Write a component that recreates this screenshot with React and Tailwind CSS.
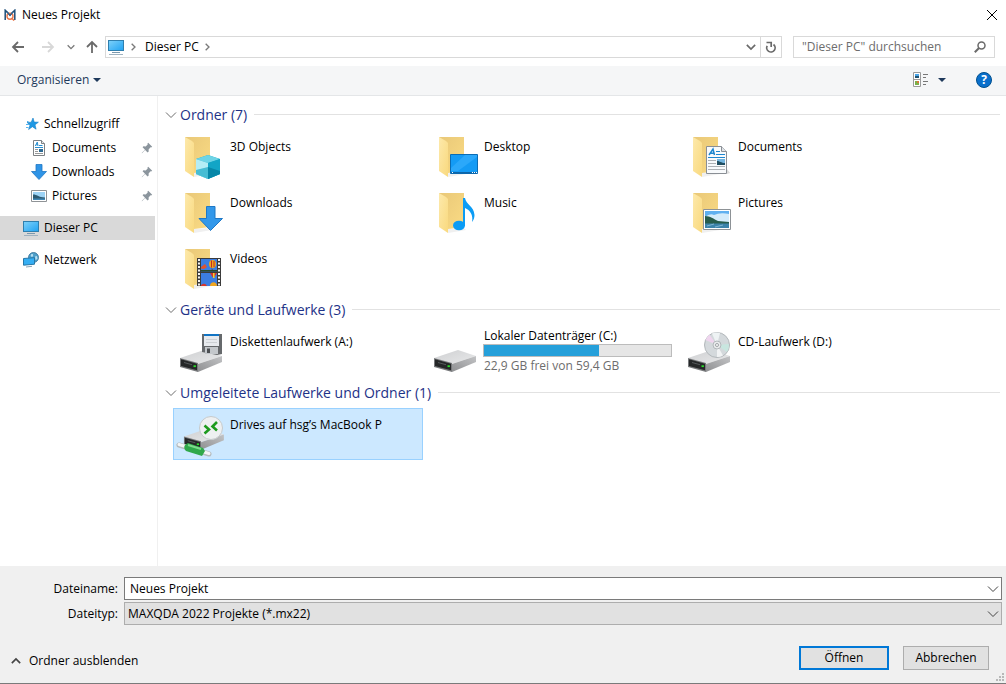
import { useState } from 'react';

const sections = [
  {
    title: 'Ordner (7)',
    items: [
      { name: '3D Objects', icon: 'objects' },
      { name: 'Desktop', icon: 'desktop' },
      { name: 'Documents', icon: 'documents' },
      { name: 'Downloads', icon: 'downloads' },
      { name: 'Music', icon: 'music' },
      { name: 'Pictures', icon: 'pictures' },
      { name: 'Videos', icon: 'videos' },
    ],
  },
  {
    title: 'Geräte und Laufwerke (3)',
    items: [
      { name: 'Diskettenlaufwerk (A:)', icon: 'floppy' },
      { name: 'Lokaler Datenträger (C:)', icon: 'disk', total: 59.4, free: 22.9, note: '22,9 GB frei von 59,4 GB' },
      { name: 'CD-Laufwerk (D:)', icon: 'cd' },
    ],
  },
  {
    title: 'Umgeleitete Laufwerke und Ordner (1)',
    items: [{ name: 'Drives auf hsg’s MacBook P', icon: 'remote' }],
  },
];

function Chevron({ className, dir = 'down', size = 12, width = 1 }) {
  const paths = {
    down: 'M1 3.5 6 8.5 11 3.5',
    up: 'M1 8.5 6 3.5 11 8.5',
    right: 'M4 1 9 6 4 11',
  };
  return (
    <svg width={size} height={size} viewBox="0 0 12 12" className={className} fill="none" stroke="currentColor" strokeWidth={width} aria-hidden="true">
      <path d={paths[dir]} />
    </svg>
  );
}

function Caret() {
  return (
    <svg width="8" height="4" viewBox="0 0 8 4" fill="#1e395b" aria-hidden="true">
      <path d="M0 0h8L4 4z" />
    </svg>
  );
}

function Arrow({ className, d }) {
  return (
    <svg width="14" height="14" viewBox="0 0 14 14" className={className} fill="none" stroke="currentColor" strokeWidth="1.8" aria-hidden="true">
      <path d={d} />
    </svg>
  );
}

function AppLogo() {
  return (
    <svg width="12" height="12" viewBox="0 0 12 12" fill="none" aria-hidden="true">
      <path d="M1.2 11V1.2L6 6l4.800-4.800V11" stroke="#1d4e79" strokeWidth="1.500" />
      <circle cx="6" cy="7.300" r="3" stroke="#e8764a" strokeWidth="1.400" />
      <path d="m3 2.800 3 3.600 3-3.600" stroke="#2b6390" strokeWidth="1.300" />
      <path d="m7.500 9 2.600 2.600" stroke="#e8764a" strokeWidth="1.400" />
    </svg>
  );
}

function ComputerIcon() {
  return (
    <svg width="16" height="16" viewBox="0 0 16 16" className="shrink-0" aria-hidden="true">
      <defs>
        <linearGradient id="screen" x1="0" y1="0" x2="1" y2="1">
          <stop offset="0" stopColor="#7fd2fa" />
          <stop offset="1" stopColor="#1fa2f2" />
        </linearGradient>
      </defs>
      <rect x=".5" y="1.5" width="15" height="10" fill="url(#screen)" stroke="#2f7fae" />
      <path d="M4 13.5h8" stroke="#7a98ad" />
      <path d="M1 15.5h14" stroke="#9fb2c0" />
    </svg>
  );
}

function StarIcon() {
  return (
    <svg width="16" height="16" viewBox="0 0 16 16" className="shrink-0" aria-hidden="true">
      <path d="m10 2 1.200 4.100 4.200.1-3.400 2.600 1.100 4.400-3.700-2.500-3.800 2.800 1.400-4.600-3-2.500 4.200-.2z" fill="#1e98e4" stroke="#1580c8" strokeWidth=".6" />
      <path d="M4 5.500h1.500M3 8.500h3M3 11.500h2.500" stroke="#56b4ee" />
    </svg>
  );
}

function DocIcon() {
  return (
    <svg width="16" height="16" viewBox="0 0 16 16" className="shrink-0" aria-hidden="true">
      <path d="M2.500.5h8l3 3v12h-11z" fill="#fff" stroke="#7d8185" />
      <path d="M10.500.5v3h3" fill="#e4e6e8" stroke="#7d8185" />
      <path d="m4.300 6 2-4 .7 4M5 4.800h2" fill="none" stroke="#2a8fd0" />
      <path d="M8 5.500h3.500M4 7.500h8" stroke="#2a8fd0" />
      <path d="M4 9.500h3M4 11.500h3M4 13.500h8" stroke="#999" />
      <path d="M8 9h4v3H8z" fill="#2d6a94" />
    </svg>
  );
}

function DownloadIcon() {
  return (
    <svg width="16" height="16" viewBox="0 0 16 16" className="shrink-0" aria-hidden="true">
      <path d="M5 .5h6v7h4.500L8 15.500.500 7.500H5z" fill="#2f94e6" stroke="#1f77c4" strokeWidth=".8" />
    </svg>
  );
}

function PictureIcon() {
  return (
    <svg width="16" height="16" viewBox="0 0 16 16" className="shrink-0" aria-hidden="true">
      <path d="M.5 2.500h15v11H.5z" fill="#fff" stroke="#8f9396" />
      <path d="M2 4h12v8H2z" fill="#9dd3f5" />
      <path d="M2 6.500c3-.5 5 2.500 12 3V12H2z" fill="#2c5a72" />
      <path d="M2 10.500h12V12H2z" fill="#3f86b4" />
    </svg>
  );
}

function NetworkIcon() {
  return (
    <svg width="16" height="16" viewBox="0 0 16 16" className="shrink-0" aria-hidden="true">
      <circle cx="10.500" cy="5.500" r="5" fill="#4f9fc9" stroke="#326f94" strokeWidth=".8" />
      <path d="M8 2.500c1.500-1 2.500 0 2 1.500s-3 1-2-1.500zM12 4.500l2-.5.500 3-2 1z" fill="#b5dff2" />
      <path d="M.5 6.500 11.500 5.700v6.500l-11 1z" fill="#35aef3" stroke="#2677a8" />
      <path d="m3 15 6-.700" stroke="#8aa4b6" />
    </svg>
  );
}

function PinIcon() {
  return (
    <svg width="12" height="12" viewBox="0 0 12 12" className="shrink-0" fill="#8b959d" aria-hidden="true">
      <path d="m7.200.8 4 4-1.100.7-.6-.2-1.900 2.100.1 2.200-1.100.8-2.500-2.500L1 11.200l-.3-.3L4 7.700 1.600 5.300l.8-1 2.300.1 2-1.900-.3-.7z" />
    </svg>
  );
}

function FolderBase() {
  return (
    <>
      <defs>
        <linearGradient id="folderBack" x1="0" y1="0" x2="1" y2="1">
          <stop offset="0" stopColor="#e9c878" />
          <stop offset="1" stopColor="#fadb84" />
        </linearGradient>
        <linearGradient id="folderFront" x1="0" y1="0" x2="1" y2="1">
          <stop offset="0" stopColor="#fde9ab" />
          <stop offset="1" stopColor="#f9d97e" />
        </linearGradient>
      </defs>
      <path d="m15 45 18-3-2-2-16 1z" fill="#f0f0f0" />
      <path d="M6 5h25v34l-16 2z" fill="url(#folderBack)" />
      <path d="m6 5 7 4 2 2v34l-9-6z" fill="url(#folderFront)" />
    </>
  );
}

function DriveBase() {
  return (
    <>
      <defs>
        <linearGradient id="driveTop" x1="0" y1="0" x2="1" y2="1">
          <stop offset="0" stopColor="#cfd0d2" />
          <stop offset="1" stopColor="#e8e9ea" />
        </linearGradient>
        <linearGradient id="driveSide" x1="0" y1="1" x2="1" y2="0">
          <stop offset="0" stopColor="#8f9092" />
          <stop offset="1" stopColor="#c2c3c5" />
        </linearGradient>
      </defs>
      <path d="m1 31 24-8 18 6-24 8z" fill="url(#driveTop)" />
      <path d="m19 37 24-8v6l-24 10z" fill="url(#driveSide)" />
      <path d="m1 31 18 5v9L1 40z" fill="#77797b" />
      <path d="m2 32.300 16 4.500v6.500L2 39z" fill="#252728" />
      <path d="m5 35.500 8 2.200" stroke="#55595b" />
      <path d="M14.500 38.300h2.400v1.800h-2.400z" fill="#2be02b" />
    </>
  );
}

const overlays = {
  objects: (
    <>
      <path d="m29 23 12 4v15l-12 5-12-5V27z" fill="#18a7c4" />
      <path d="m29 23 12 4-12 4-12-4z" fill="#6ed4e6" />
      <path d="m17 27 12 4v16l-12-5z" fill="#b4edf5" />
      <path d="m17 38 12-3v12l-12-5z" fill="#47bdd4" />
      <path d="m29 31 12-4v15l-12 5z" fill="#12a5c6" />
      <path d="m29 35 12 4v3l-12 5z" fill="#0787a8" />
    </>
  ),
  desktop: (
    <>
      <path d="M17.500 22.500h27v19h-27z" fill="#149bf5" stroke="#0b6cb4" />
      <path d="m18 36 14-13h12v2L25 39h-7z" fill="#2ba8fa" />
      <path d="M18 40h26v1.500H18z" fill="#0d65a8" />
      <path d="M19 40.500h1M39 40.500h1M41 40.500h1M43 40.500h1" stroke="#fff" />
    </>
  ),
  documents: (
    <>
      <path d="m40 42 3-1-3-4z" fill="#ddd" />
      <path d="M19.500 14.500h15l5 5v22h-20z" fill="#f8fafc" stroke="#8a8f95" />
      <path d="M34.500 14.500v5h5" fill="#dfe3e7" stroke="#8a8f95" />
      <path d="m22 23 4-6 1.500 6M23 21.300h4" fill="none" stroke="#1d86cf" strokeWidth="1.500" />
      <path d="M29 19.500h4M29 22.500h9M21 25.500h17" stroke="#1d86cf" />
      <path d="M21 28.500h8M21 31.500h8M21 34.500h17M21 37.500h17" stroke="#adb1b5" />
      <path d="M30 27h8v6h-8z" fill="#73b5df" />
      <path d="M30 29c3 0 4 2 8 2v2h-8z" fill="#214f63" />
    </>
  ),
  downloads: <path d="M27.500 18.500h8.500v12h7.500L31.500 42.500 20 30.500h7.500z" fill="#3398ea" stroke="#1f78c6" />,
  music: (
    <>
      <ellipse cx="26" cy="37.500" rx="6" ry="4.800" fill="#0b9cf5" />
      <path d="M30 10h2c1 7 9 8 9.500 17 0 3-1 5-2.500 7 1.500-7-2-12-7-14v18h-2z" fill="#0b9cf5" />
    </>
  ),
  pictures: (
    <>
      <path d="M16.500 21.500h27v20h-27z" fill="#fff" stroke="#8d9296" />
      <path d="M18 23h24v17H18z" fill="#5fb0f0" />
      <path d="M18 29q5-4 9-2 6-3 15-1v8H18z" fill="#d3ebfa" />
      <path d="M18 28c5 0 9 3 13 5l11 1v2H18z" fill="#275c4c" />
      <path d="M18 35.500h24V40H18z" fill="#3c83aa" />
      <path d="m20 38 7-2M28 39l8-2" stroke="#7fb5d2" />
    </>
  ),
  videos: (
    <>
      <path d="M18 14h24v28H18z" fill="#3b3b3b" />
      <path d="M22 15h16v12.500H22zM22 29h16v13H22z" fill="#3c7de0" />
      <path d="M20 15v27M40 15v27" stroke="#f2f2f2" strokeWidth="2" strokeDasharray="2 1.500" />
      <ellipse cx="33.500" cy="20" rx="3.500" ry="4" fill="#f0a51e" />
      <path d="M32.500 16.500v7M35 17v6" stroke="#c22a26" />
      <path d="m32.500 24 2 3h-1.500z" fill="#5b3b1c" />
      <path d="m22 23 4-3 2 3-3 2-3-.5z" fill="#e2542c" />
      <path d="M22 26h16v1.500H22z" fill="#2b4a2a" />
      <path d="M31 29h7l-2.500 4h-2z" fill="#d6362c" />
      <path d="M34 29h1.500v5H34z" fill="#f1d22e" />
      <path d="M31 42c0-5 7-5 7 0z" fill="#f0a51e" />
      <path d="M22 41q4-3 6 1h-6z" fill="#d6362c" />
    </>
  ),
  floppy: (
    <>
      <path d="M23 7h20v20l-5 1-15-3z" fill="#66696c" />
      <path d="M25 7h15v12H25z" fill="#e7eaee" />
      <path d="M25 7h15v2H25z" fill="#1174c4" />
      <path d="M27 12.500h11M27 15.500h11" stroke="#ccd0d4" />
      <path d="M26 20h13v7H26z" fill="#c3c7cb" />
      <path d="M28 21.500h3v4.500h-3z" fill="#4c4f52" />
    </>
  ),
  cd: (
    <>
      <circle cx="30" cy="18" r="12.500" fill="#d4d9dc" stroke="#b3b8bb" />
      <path d="M30 18 18.500 13a12 12 0 0 1 4-5.200z" fill="#efd5ee" />
      <path d="m30 18-5-11.400a12 12 0 0 1 8-.6z" fill="#eef3f4" />
      <path d="m30 18 12-1a12 12 0 0 1-2 8z" fill="#c8e6df" />
      <path d="m30 18 6 10.500a12 12 0 0 1-6 1.500z" fill="#f1f3f4" />
      <circle cx="30" cy="18" r="4" fill="#e9ebec" stroke="#b3b8bb" />
      <circle cx="30" cy="18" r="1.500" fill="#fff" stroke="#9ea3a6" />
    </>
  ),
  remote: (
    <>
      <path d="m0 35 30 9" stroke="#b4babd" strokeWidth="5" strokeLinecap="round" />
      <path d="m0 34.500 30 9" stroke="#f3f5f6" strokeWidth="3" strokeLinecap="round" />
      <path d="m6 35 3-2 15 5 2 3-3 5-16-5q-3-3-1-6z" fill="#2fa84a" />
      <path d="m9 35 13 4" stroke="#7ddb8c" strokeWidth="2" />
      <circle cx="32" cy="18" r="11.500" fill="#eef0f1" stroke="#c6cacc" />
      <path d="m25.500 15.500 4.500 4-4.500 4M38 12l-4.500 4.500L38 20.500" fill="none" stroke="#1d9a1d" strokeWidth="2.600" />
    </>
  ),
};

const driveIcons = ['floppy', 'disk', 'cd', 'remote'];

function TileIcon({ icon }) {
  const isDrive = driveIcons.includes(icon);
  return (
    <svg width="48" height="48" viewBox="0 0 48 48" className="shrink-0 overflow-visible" aria-hidden="true">
      {icon === 'remote' ? (
        <g transform="translate(4 -3) scale(.95)">
          <DriveBase />
        </g>
      ) : isDrive ? (
        <DriveBase />
      ) : (
        <FolderBase />
      )}
      {overlays[icon]}
    </svg>
  );
}

function Tile({ item, selected, onSelect }) {
  return (
    <button
      type="button"
      onClick={onSelect}
      className={`flex h-[52px] items-center gap-[2px] border pl-[5px] text-left ${
        selected ? 'border-[#99d1ff] bg-[#cce8ff]' : 'border-transparent hover:bg-[#e5f3ff]'
      }`}
    >
      <TileIcon icon={item.icon} />
      {item.total ? (
        <span className="flex w-[189px] flex-col pb-px">
          <span className="pl-px">{item.name}</span>
          <span className="block h-[13px] border border-[#bcbcbc] bg-[#e6e6e6]">
            <span className="block h-full bg-[#26a0da]" style={{ width: `${((item.total - item.free) / item.total) * 100}%` }}></span>
          </span>
          <span className="pt-px pl-px text-[#6d6d6d]">{item.note}</span>
        </span>
      ) : (
        <span className="self-start pt-2 pl-px">{item.name}</span>
      )}
    </button>
  );
}

function Section({ section, selected, onSelect }) {
  return (
    <section>
      <h2 className="-ml-2 flex h-[31px] items-center gap-[3px] text-[14px] text-[#1e3287]">
        <Chevron className="shrink-0 text-[#6d6d6d]" />
        <span>{section.title}</span>
        <span className="ml-1 h-px flex-1 bg-[#e2e2e2]"></span>
      </h2>
      <div className="grid grid-cols-[repeat(auto-fill,250px)] gap-1">
        {section.items.map((item) => (
          <Tile key={item.name} item={item} selected={selected === item.name} onSelect={() => onSelect(item.name)} />
        ))}
      </div>
    </section>
  );
}

function SideItem({ icon, label, nested, pinned, active }) {
  return (
    <a
      href="#"
      className={`mr-[2px] flex h-6 items-center gap-[5px] pr-[2px] ${nested ? 'pl-[31px]' : 'pl-[23px]'} ${active ? 'bg-[#d9d9d9]' : ''}`}
    >
      {icon}
      <span className="flex-1">{label}</span>
      {pinned && <PinIcon />}
    </a>
  );
}

export default function App() {
  const [selected, setSelected] = useState('Drives auf hsg’s MacBook P');
  const [fileName, setFileName] = useState('Neues Projekt');

  return (
    <div className="flex min-h-screen flex-col bg-white font-['Open_Sans',sans-serif] text-[12px] leading-4 text-black">
      {/* Title bar */}
      <header className="flex h-[30px] items-center gap-[6px] pr-2 pl-[4px]">
        <AppLogo />
        <h1 className="flex-1">Neues Projekt</h1>
        <button type="button" aria-label="Schließen">
          <svg width="12" height="12" viewBox="0 0 12 12" fill="none" stroke="#000">
            <path d="m1 1 10 10M11 1 1 11" />
          </svg>
        </button>
      </header>

      {/* Navigation */}
      <nav className="flex h-9 items-center pr-[11px] pb-[2px] pl-[11px]">
        <button type="button" aria-label="Zurück" className="text-[#6a6a6a]">
          <Arrow d="M13 7H2M7 2 2 7l5 5" />
        </button>
        <button type="button" aria-label="Vorwärts" className="ml-4 text-[#d8d8d8]">
          <Arrow d="M1 7h11M7 2l5 5-5 5" />
        </button>
        <button type="button" aria-label="Verlauf" className="ml-3 text-[#7a7a7a]">
          <Chevron size={8} width={2} />
        </button>
        <button type="button" aria-label="Nach oben" className="ml-[10px] text-[#6a6a6a]">
          <Arrow d="M7 13V2M2 7l5-5 5 5" />
        </button>
        <div className="ml-[6px] flex h-[22px] flex-1 items-center border border-[#d9d9d9] pl-[2px]">
          <ComputerIcon />
          <Chevron dir="right" size={8} width={2} className="ml-[5px] text-[#7a7a7a]" />
          <button type="button" className="ml-2">Dieser PC</button>
          <Chevron dir="right" size={8} width={2} className="ml-1 text-[#7a7a7a]" />
          <button type="button" aria-label="Vorherige Orte" className="mr-1 ml-auto text-[#6a6a6a]">
            <Chevron size={10} width={2} />
          </button>
          <button type="button" aria-label="Aktualisieren" className="flex h-full w-[21px] items-center justify-center border-l border-[#d9d9d9]">
            <svg width="12" height="12" viewBox="0 0 12 12" fill="none" stroke="#6a6a6a" strokeWidth="1.700">
              <path d="M2.200 4.800A4.200 4.200 0 1 0 8.500 3.500" />
              <path d="M1.500 1.500h4.700V6" />
            </svg>
          </button>
        </div>
        <div className="ml-[11px] flex h-[22px] w-[202px] items-center border border-[#d9d9d9] pr-2 pl-2">
          <input
            type="search"
            aria-label="Suchen"
            placeholder={'"Dieser PC" durchsuchen'}
            className="min-w-0 flex-1 outline-none placeholder:text-[#6d6d6d]"
          />
          <svg width="12" height="12" viewBox="0 0 12 12" fill="none" stroke="#6a6a6a" strokeWidth="1.500" aria-hidden="true">
            <circle cx="7.500" cy="4.500" r="3.500" />
            <path d="M5 7 .8 11.200" strokeWidth="2" />
          </svg>
        </div>
      </nav>

      {/* Toolbar */}
      <div className="flex h-[30px] items-center border-b border-[#e4e6e8] bg-[#f5f6f7] pr-[14px] pb-px pl-[17px]">
        <button type="button" className="flex items-center gap-1 text-[#1e395b]">
          Organisieren
          <Caret />
        </button>
        <button type="button" aria-label="Ansicht ändern" className="ml-auto flex items-center gap-[10px]">
          <svg width="16" height="16" viewBox="0 0 16 16" aria-hidden="true">
            <path d="M1.500.500h7v14h-7zM1.500 7.500h7" fill="#fff" stroke="#9a9a9a" />
            <path d="M3 2h4v2H3z" fill="#4aa5e8" />
            <path d="M3 4h4v2H3z" fill="#1f5272" />
            <path d="M3 9h4v4H3z" fill="#7bb14b" />
            <path d="M5 9h2v2H5z" fill="#d8783c" />
            <path d="M11 2.500h5M11 5.500h3M11 9.500h5M11 12.500h3" stroke="#777" />
          </svg>
          <Caret />
        </button>
        <button
          type="button"
          aria-label="Hilfe"
          className="ml-[30px] flex h-4 w-4 items-center justify-center rounded-full border border-[#00508f] bg-[#0a6fcb] font-bold text-white"
        >
          ?
        </button>
      </div>

      {/* Content */}
      <div className="flex flex-1">
        <aside className="flex w-[158px] shrink-0 flex-col gap-2 border-r border-[#f0f0f0] pt-4">
          <div>
            <SideItem icon={<StarIcon />} label="Schnellzugriff" />
            <SideItem icon={<DocIcon />} label="Documents" nested pinned />
            <SideItem icon={<DownloadIcon />} label="Downloads" nested pinned />
            <SideItem icon={<PictureIcon />} label="Pictures" nested pinned />
          </div>
          <SideItem icon={<ComputerIcon />} label="Dieser PC" active />
          <SideItem icon={<NetworkIcon />} label="Netzwerk" />
        </aside>
        <main className="min-w-0 flex-1 pt-[3px] pr-[6px] pl-[15px]">
          {sections.map((section) => (
            <Section key={section.title} section={section} selected={selected} onSelect={setSelected} />
          ))}
        </main>
      </div>

      {/* Footer */}
      <footer className="relative border-b border-[#7a7a7a] bg-[#f0f0f0] pt-[11px] pb-[13px]">
        <div className="grid grid-cols-[118px_1fr] items-center gap-x-[6px] gap-y-[2px] pr-1">
          <label htmlFor="file-name" className="text-right">Dateiname:</label>
          <div className="flex h-[23px] items-center border border-[#7a7a7a] bg-white pr-[2px] pl-[5px]">
            <input
              id="file-name"
              type="text"
              value={fileName}
              onChange={(e) => setFileName(e.target.value)}
              className="min-w-0 flex-1 outline-none"
            />
            <button type="button" aria-label="Vorschläge" className="text-[#444]">
              <Chevron />
            </button>
          </div>
          <label htmlFor="file-type" className="text-right">Dateityp:</label>
          <div className="grid h-[23px] items-center border border-[#adadad] bg-[#e1e1e1] text-[#444]">
            <select id="file-type" className="col-start-1 row-start-1 appearance-none pl-[3px] text-black outline-none">
              <option>MAXQDA 2022 Projekte (*.mx22)</option>
            </select>
            <Chevron className="pointer-events-none col-start-1 row-start-1 mr-[2px] justify-self-end" />
          </div>
        </div>
        <div className="mt-[21px] flex items-center pr-[17px] pl-[11px]">
          <button type="button" className="mt-[6px] mr-auto flex items-center gap-2">
            <Chevron dir="up" size={10} width={2} className="text-[#444]" />
            Ordner ausblenden
          </button>
          <button type="button" className="h-6 w-[90px] border-2 border-[#0078d7] bg-[#e1e1e1]">Öffnen</button>
          <button type="button" className="ml-[14px] h-6 w-[86px] border border-[#adadad] bg-[#e1e1e1]">Abbrechen</button>
        </div>
        <svg width="9" height="9" viewBox="0 0 9 9" className="absolute right-[1px] bottom-[1px]" fill="#b8b8b8" aria-hidden="true">
          <path d="M6 0h2v2H6zM3 3h2v2H3zM6 3h2v2H6zM0 6h2v2H0zM3 6h2v2H3zM6 6h2v2H6z" />
        </svg>
      </footer>
    </div>
  );
}
